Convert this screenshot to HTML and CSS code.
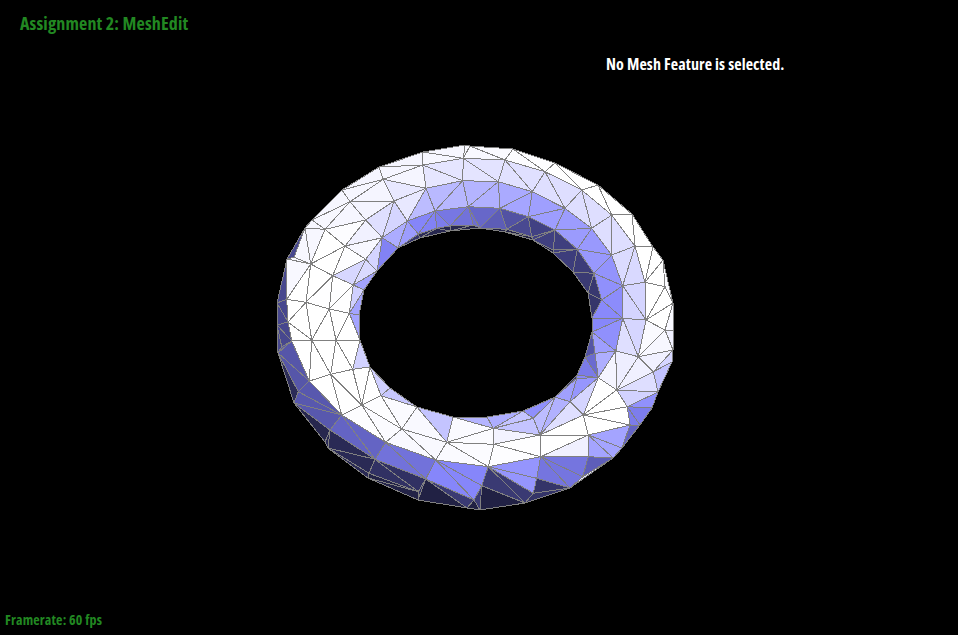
FILE: index.html
```html
<!DOCTYPE html>
<html lang="en">
<head>
<meta charset="utf-8">
<title>Assignment 2: MeshEdit</title>
<link rel="stylesheet" href="styles.css">
</head>
<body>
<main class="viewer">
  <svg class="mesh" id="mesh" width="958" height="635" viewBox="0 0 958 635" aria-label="Torus mesh"></svg>
  <header class="hud-top">
    <h1 class="title">Assignment 2: MeshEdit</h1>
    <p class="status">No Mesh Feature is selected.</p>
  </header>
  <footer class="framerate">Framerate: 60 fps</footer>
</main>
<script src="mesh.js"></script>
</body>
</html>
```
FILE: styles.css
```css
html, body { margin: 0; padding: 0; background: #000; }
.viewer {
  position: relative;
  width: 958px;
  height: 635px;
  overflow: hidden;
  background: #000;
  display: flex;
  flex-direction: column;
  justify-content: space-between;
  font-family: "Open Sans", "Noto Sans", sans-serif;
  font-weight: 700;
  font-stretch: 77%;
}
.mesh { position: absolute; left: 0; top: 0; }
.hud-top { position: relative; display: flex; height: 80px; }
.title { margin: 11px 0 0 20px; width: 586px; font-size: 18px; line-height: 24px; font-weight: 700; color: #228822; letter-spacing: .14px; }
.status { margin: 52px 0 0 0; font-size: 16px; line-height: 24px; color: #fff; letter-spacing: .11px; }
.framerate { position: relative; margin: 0 0 5px 5px; font-size: 14px; line-height: 20px; color: #228822; letter-spacing: .16px; }
.tri { stroke: #808080; stroke-width: 1; shape-rendering: crispEdges; }
.edge { fill: none; stroke: #808080; stroke-width: 1; shape-rendering: crispEdges; }
```
FILE: mesh.js
```js
(function () {
  var NS = "http://www.w3.org/2000/svg";
  var OUTER = [465,145,470,146,513,149,555,163,598,185,632,214,653,247,663,260,673,303,674,330,673,350,672,362,658,392,652,408,640,425,622,448,613,458,570,488,525,503,480,510,467,508,418,500,368,478,328,448,325,442,294,403,278,353,277,325,277,303,287,259,305,228,312,220,342,190,379,167,423,152];
  var HOLE = [480,228,505,232,533,240,553,253,573,272,588,293,592,318,592,332,585,357,577,375,555,397,523,411,487,417,453,417,417,407,390,388,370,367,360,340,359,315,364,290,377,271,398,248,420,238,450,231];
  var EXTRA = [288,322];
  var CROPS = [
    { o: [270,140], p: [580,55,458,75,340,118,240,185,165,268,72,352,50,478,578,122,468,145,372,183,287,240,225,318,122,372,108,487,495,213,412,243,337,293,287,358,188,407,178,507,595,200,238,520,250,435,540,258,500,265,445,282,610,255] },
    { o: [470,140], p: [105,60,85,125,90,205,110,268,225,95,187,155,175,230,185,290,335,150,285,205,255,270,250,330,425,225,365,265,322,328,310,390,495,318,425,345,372,400,360,460,585,440,525,427,458,437,395,480,370,530,528,540,458,535] },
    { o: [270,325], p: [198,45,125,45,65,48,35,65,248,133,182,148,118,168,85,200,333,212,275,240,215,270,180,315,395,312,347,352,315,403,297,445,530,352,497,405,467,462,445,500,612,525] },
    { o: [470,325], p: [585,15,437,78,505,95,550,140,385,158,440,195,472,245,565,200,300,230,340,270,355,330,480,300,190,280,210,330,212,395,355,395,455,370,338,455,200,460,72,358,70,310,55,425,35,482,190,505,375,85,320,160] }
  ];
  /* seven shade bands across the tube, every 30 degrees clockwise from the top: end of band (0 = hole, 1 = silhouette), shade */
  var BANDS = [
    [.03,.5,.05,.5,.24,3.2,.56,5.5,.85,7.3,.95,8.5,1,8.5],
    [.03,.5,.05,.5,.25,1.8,.55,4.8,.85,7,.95,9,1,9],
    [.02,.5,.04,.5,.23,1.6,.52,4.6,.8,7,.95,9,1,9],
    [.01,.5,.02,.5,.12,1.2,.38,4,.65,6.5,.9,9,1,8.5],
    [.01,1,.03,1,.15,4.5,.35,6.5,.75,9,.88,6,1,3.5],
    [.02,5,.05,5,.25,6,.4,7.5,.62,9,.8,8.5,1,8.5],
    [.02,5,.05,5.5,.1,6,.3,8.7,.52,8.7,.8,8.5,1,8.5],
    [.02,5.5,.05,5.5,.15,6,.3,8.5,.5,8.5,.8,8.5,1,8.5],
    [.02,6,.05,6.5,.1,7,.4,9,.7,9,.85,8.5,1,8.5],
    [.02,5,.05,5,.12,6,.5,9,.86,9,.93,8.5,1,8.5],
    [.02,3,.1,5,.3,7,.5,8.8,.7,9,.98,8.4,1,8.4],
    [.03,.8,.05,1,.22,4,.42,5.8,.7,7.5,.9,8.2,1,8.2]
  ];
  /* hand-traced wall patches of the tube's underside: shade, then outline */
  var PATCHES = [
    [2,[305,228,294,257,287,299,288,322,282,347,278,353,277,303,287,259]],
    [2.5,[292,341,309,381,298,392,282,347]],
    [2.6,[309,381,342,415,330,430,298,392]],
    [3,[342,415,386,442,375,459,330,430]],
    [3.4,[386,442,436,460,426,479,375,459]],
    [4,[436,460,488,467,482,486,426,479]],
    [4.5,[488,467,541,457,537,478,482,486]],
    [3.5,[541,457,588,457,583,477,537,478]],
    [2.8,[588,457,622,448,613,458,583,477]],
    [3,[630,425,655,410,640,425,622,448]],
    [5,[588,435,630,425,622,448,588,457]],
    [.4,[418,492,474,500,525,490,525,503,480,510,418,500]],
    [.5,[369,473,418,492,418,500,368,478]],
    [1,[282,347,298,392,294,403,278,353]],
    [.7,[298,392,330,430,325,442,294,403]],
    [.9,[330,430,375,459,368,478,328,448,325,442]],
    [1.2,[375,459,426,479,418,500,368,478]],
    [1.5,[426,479,482,486,480,510,418,500]],
    [1.5,[482,486,537,478,525,503,480,510]],
    [1.3,[537,478,583,477,570,488,525,503]]
  ];
  var CX = 478, CY = 325;
  var RAMP = [[26,26,54],[44,44,88],[71,71,142],[100,100,196],[134,134,250],[164,164,255],[196,196,255],[222,222,255],[242,242,255],[255,255,255]];

  function pairs(a) { var r = []; for (var i = 0; i < a.length; i += 2) r.push([a[i], a[i + 1]]); return r; }
  function colour(v) {
    var i = Math.min(8, Math.floor(v)), f = v - i, a = RAMP[i], b = RAMP[i + 1];
    return "rgb(" + [0, 1, 2].map(function (k) { return Math.round(a[k] + (b[k] - a[k]) * f); }).join(",") + ")";
  }
  function inside(p, poly) {
    var c = false;
    for (var i = 0, j = poly.length - 1; i < poly.length; j = i++) {
      if ((poly[i][1] > p[1]) !== (poly[j][1] > p[1]) &&
          p[0] < (poly[j][0] - poly[i][0]) * (p[1] - poly[i][1]) / (poly[j][1] - poly[i][1]) + poly[i][0]) c = !c;
    }
    return c;
  }
  function rayRadius(dx, dy, poly) {
    var best = 0;
    for (var i = 0, j = poly.length - 1; i < poly.length; j = i++) {
      var ax = poly[j][0] - CX, ay = poly[j][1] - CY, ex = poly[i][0] - poly[j][0], ey = poly[i][1] - poly[j][1];
      var den = dx * ey - dy * ex;
      if (Math.abs(den) < 1e-9) continue;
      var t = (ax * ey - ay * ex) / den, s = (ax * dy - ay * dx) / den;
      if (t > 0 && s >= 0 && s <= 1 && t > best) best = t;
    }
    return best;
  }

  var outer = pairs(OUTER), hole = pairs(HOLE), pts = [];
  var patches = PATCHES.map(function (p) { return { s: p[0], poly: pairs(p[1]) }; });
  function shadeAt(m) {
    for (var j = 0; j < patches.length; j++) if (inside(m, patches[j].poly)) return patches[j].s;
    var dx = m[0] - CX, dy = m[1] - CY, d = Math.sqrt(dx * dx + dy * dy);
    var ux = dx / d, uy = dy / d;
    var rH = rayRadius(ux, uy, hole), rO = rayRadius(ux, uy, outer);
    var u = (d - rH) / (rO - rH);
    var a = (Math.atan2(dx, -dy) * 180 / Math.PI + 360) % 360;
    var k = Math.floor(a / 30) % 12, f = (a - k * 30) / 30;
    var A = BANDS[k], B = BANDS[(k + 1) % 12], s = A[13];
    for (var i = 0; i < 14; i += 2) {
      if (u <= A[i] * (1 - f) + B[i] * f) { s = A[i + 1] * (1 - f) + B[i + 1] * f; break; }
    }
    return s;
  }
  function add(q) {
    for (var i = 0; i < pts.length; i++) {
      var dx = pts[i][0] - q[0], dy = pts[i][1] - q[1];
      if (dx * dx + dy * dy < 9) return;
    }
    pts.push(q);
  }
  outer.concat(hole, pairs(EXTRA)).forEach(add);
  CROPS.forEach(function (c) {
    for (var i = 0; i < c.p.length; i += 2) add([c.o[0] + c.p[i] / 3, c.o[1] + c.p[i + 1] / 3]);
  });

  function delaunay(P) {
    var n = P.length, all = P.concat([[-5000, -5000], [7000, -5000], [500, 8000]]);
    function circ(a, b, c) {
      var A = all[a], B = all[b], C = all[c];
      var d = 2 * (A[0] * (B[1] - C[1]) + B[0] * (C[1] - A[1]) + C[0] * (A[1] - B[1]));
      var a2 = A[0] * A[0] + A[1] * A[1], b2 = B[0] * B[0] + B[1] * B[1], c2 = C[0] * C[0] + C[1] * C[1];
      var x = (a2 * (B[1] - C[1]) + b2 * (C[1] - A[1]) + c2 * (A[1] - B[1])) / d;
      var y = (a2 * (C[0] - B[0]) + b2 * (A[0] - C[0]) + c2 * (B[0] - A[0])) / d;
      return { v: [a, b, c], x: x, y: y, r: (A[0] - x) * (A[0] - x) + (A[1] - y) * (A[1] - y) };
    }
    var tris = [circ(n, n + 1, n + 2)];
    for (var i = 0; i < n; i++) {
      var p = all[i], keep = [], edges = {};
      tris.forEach(function (t) {
        var dx = p[0] - t.x, dy = p[1] - t.y;
        if (dx * dx + dy * dy < t.r) {
          [[t.v[0], t.v[1]], [t.v[1], t.v[2]], [t.v[2], t.v[0]]].forEach(function (e) {
            var k = Math.min(e[0], e[1]) + "_" + Math.max(e[0], e[1]);
            edges[k] = edges[k] ? null : e;
          });
        } else keep.push(t);
      });
      Object.keys(edges).forEach(function (k) { if (edges[k]) keep.push(circ(edges[k][0], edges[k][1], i)); });
      tris = keep;
    }
    return tris.filter(function (t) { return t.v[0] < n && t.v[1] < n && t.v[2] < n; });
  }

  function el(name, attrs, parent) {
    var e = document.createElementNS(NS, name);
    Object.keys(attrs).forEach(function (k) { e.setAttribute(k, attrs[k]); });
    parent.appendChild(e);
    return e;
  }
  function str(poly) { return poly.map(function (q) { return q[0].toFixed(1) + "," + q[1].toFixed(1); }).join(" "); }
  function dpath(poly) { return "M" + str(poly).replace(/ /g, "L") + "Z"; }

  var svg = document.getElementById("mesh");
  var defs = el("defs", {}, svg);
  var clip = el("clipPath", { id: "ring" }, defs);
  el("path", { d: dpath(outer) + dpath(hole), "clip-rule": "evenodd" }, clip);
  var g = el("g", { "clip-path": "url(#ring)" }, svg);
  delaunay(pts).forEach(function (t) {
    var a = pts[t.v[0]], b = pts[t.v[1]], c = pts[t.v[2]];
    var m = [(a[0] + b[0] + c[0]) / 3, (a[1] + b[1] + c[1]) / 3];
    if (!inside(m, outer) || inside(m, hole)) return;
    el("polygon", { "class": "tri", points: str([a, b, c]), fill: colour(shadeAt(m)) }, g);
  });
  el("polygon", { "class": "edge", points: str(outer) }, svg);
  el("polygon", { "class": "edge", points: str(hole) }, svg);
})();
```
